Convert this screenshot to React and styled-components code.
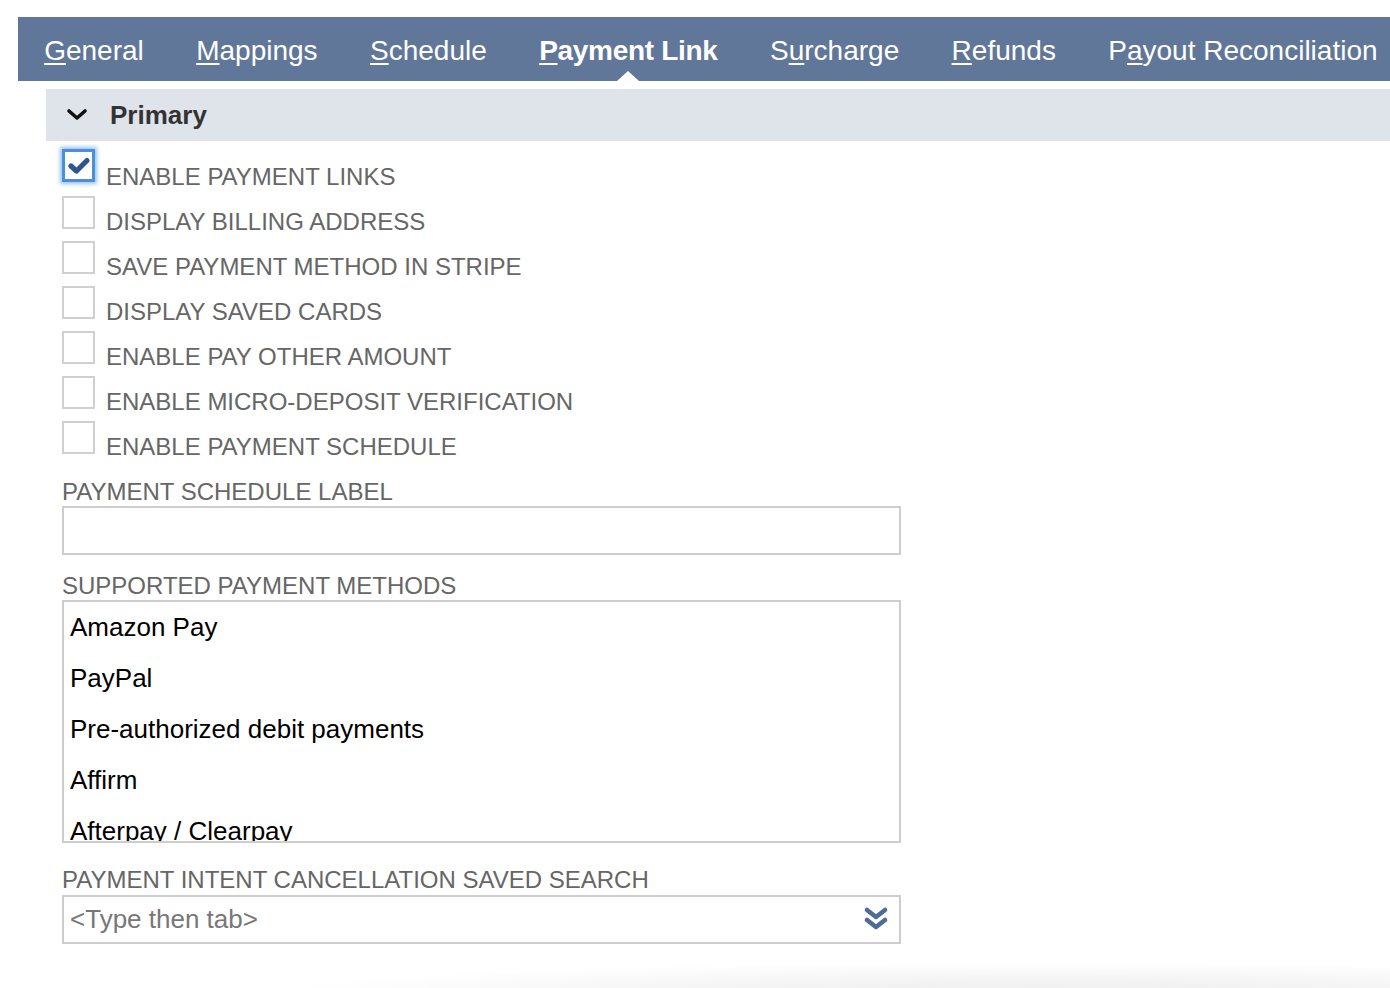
import React from "react";
import styled, { createGlobalStyle } from "styled-components";

const tabs = [
  { pre: "", key: "G", post: "eneral" },
  { pre: "", key: "M", post: "appings" },
  { pre: "", key: "S", post: "chedule" },
  { pre: "", key: "P", post: "ayment Link", active: true },
  { pre: "S", key: "u", post: "rcharge" },
  { pre: "", key: "R", post: "efunds" },
  { pre: "P", key: "a", post: "yout Reconciliation" },
];

const options = [
  { label: "ENABLE PAYMENT LINKS", checked: true },
  { label: "DISPLAY BILLING ADDRESS" },
  { label: "SAVE PAYMENT METHOD IN STRIPE" },
  { label: "DISPLAY SAVED CARDS" },
  { label: "ENABLE PAY OTHER AMOUNT" },
  { label: "ENABLE MICRO-DEPOSIT VERIFICATION" },
  { label: "ENABLE PAYMENT SCHEDULE" },
];

const methods = [
  "Amazon Pay",
  "PayPal",
  "Pre-authorized debit payments",
  "Affirm",
  "Afterpay / Clearpay",
];

export default function App() {
  return (
    <>
      <GlobalStyle />
      <Page>
        <TabBar>
          {tabs.map((t) => (
            <Tab key={t.key + t.post} $active={t.active}>
              {t.pre}
              <u>{t.key}</u>
              {t.post}
            </Tab>
          ))}
        </TabBar>

        <Content>
          <SectionHeader>
            <svg width="22" height="14" viewBox="0 0 22 14">
              <path
                d="M3 3 L11 10 L19 3"
                fill="none"
                stroke="#111"
                strokeWidth="3.6"
                strokeLinecap="round"
                strokeLinejoin="round"
              />
            </svg>
            <SectionTitle>Primary</SectionTitle>
          </SectionHeader>

          <Fields>
            {options.map((o) => (
              <CheckRow key={o.label}>
                <Box $checked={o.checked}>
                  {o.checked && (
                    <svg width="24" height="20" viewBox="0 0 24 20">
                      <path
                        d="M4 10 L9.5 15 L20 4.5"
                        fill="none"
                        stroke="#2d5592"
                        strokeWidth="5.2"
                        strokeLinecap="round"
                        strokeLinejoin="round"
                      />
                    </svg>
                  )}
                </Box>
                <CheckLabel>{o.label}</CheckLabel>
              </CheckRow>
            ))}

            <FieldLabel $top={14}>PAYMENT SCHEDULE LABEL</FieldLabel>
            <TextInput />

            <FieldLabel $top={19}>SUPPORTED PAYMENT METHODS</FieldLabel>
            <ListBox>
              {methods.map((m) => (
                <ListItem key={m}>{m}</ListItem>
              ))}
            </ListBox>

            <FieldLabel $top={25} $bottom={3}>
              PAYMENT INTENT CANCELLATION SAVED SEARCH
            </FieldLabel>
            <SelectInput>
              <Placeholder>&lt;Type then tab&gt;</Placeholder>
              <svg width="26" height="28" viewBox="0 0 26 28">
                <path
                  d="M4 4 L13 11 L22 4 M4 14 L13 21 L22 14"
                  fill="none"
                  stroke="#4f6c96"
                  strokeWidth="4.6"
                  strokeLinecap="round"
                  strokeLinejoin="round"
                />
              </svg>
            </SelectInput>
          </Fields>
        </Content>
        <Fade />
      </Page>
    </>
  );
}

const GlobalStyle = createGlobalStyle`
  html, body {
    margin: 0;
    background: #fff;
    font-family: "Liberation Sans", Arial, sans-serif;
  }
`;

const Page = styled.div`
  padding: 17px 0 0 18px;
  min-height: 988px;
  box-sizing: border-box;
  overflow: hidden;
  display: flex;
  flex-direction: column;
`;

const TabBar = styled.div`
  display: flex;
  height: 64px;
  background: #607799;
  white-space: nowrap;
`;

const Tab = styled.div`
  position: relative;
  height: 64px;
  padding: 0 26.2px;
  line-height: 68px;
  font-size: 28px;
  color: #fff;
  font-weight: ${(p) => (p.$active ? 700 : 400)};
  letter-spacing: ${(p) => (p.$active ? "-0.3px" : "0")};

  u {
    text-decoration-thickness: 2px;
    text-underline-offset: 3px;
  }

  &::after {
    content: "";
    display: ${(p) => (p.$active ? "block" : "none")};
    position: absolute;
    left: 50%;
    bottom: 0;
    margin-left: -11px;
    border-left: 11px solid transparent;
    border-right: 11px solid transparent;
    border-bottom: 10px solid #fff;
  }
`;

const Content = styled.div`
  margin: 8px 0 0 28px;
`;

const SectionHeader = styled.div`
  display: flex;
  align-items: center;
  gap: 22px;
  height: 52px;
  padding-left: 20px;
  background: #dfe3ea;
`;

const SectionTitle = styled.div`
  font-size: 26px;
  font-weight: 700;
  color: #333;
`;

const Fields = styled.div`
  display: flex;
  flex-direction: column;
  align-items: flex-start;
  padding: 10px 0 0 16px;
`;

const CheckRow = styled.div`
  display: flex;
  align-items: flex-start;
  gap: 11px;
  height: 45px;
`;

const Box = styled.div`
  width: 33px;
  height: 33px;
  box-sizing: border-box;
  border: ${(p) => (p.$checked ? "3px solid #4a8fdc" : "2px solid #d0d0d0")};
  box-shadow: ${(p) => (p.$checked ? "0 0 4px 2px rgba(74,143,220,0.55)" : "none")};
  margin-top: ${(p) => (p.$checked ? "-2px" : "0")};
  background: #fff;
  display: flex;
  align-items: center;
  justify-content: center;
`;

const CheckLabel = styled.div`
  padding-top: 14px;
  font-size: 24px;
  line-height: 24px;
  color: #666;
`;

const FieldLabel = styled.div`
  margin-top: ${(p) => p.$top}px;
  margin-bottom: ${(p) => p.$bottom ?? 2}px;
  font-size: 24px;
  line-height: 24px;
  color: #666;
`;

const TextInput = styled.div`
  width: 839px;
  height: 49px;
  box-sizing: border-box;
  border: 2px solid #cdcdcd;
`;

const ListBox = styled.div`
  width: 839px;
  height: 243px;
  box-sizing: border-box;
  border: 2px solid #cdcdcd;
  overflow: hidden;
`;

const ListItem = styled.div`
  padding-left: 6px;
  height: 51px;
  line-height: 51px;
  font-size: 26px;
  color: #000;
`;

const SelectInput = styled.div`
  width: 839px;
  height: 49px;
  box-sizing: border-box;
  border: 2px solid #cdcdcd;
  display: flex;
  align-items: center;
  justify-content: space-between;
  padding: 0 10px 0 6px;
`;

const Placeholder = styled.div`
  font-size: 26px;
  color: #777;
`;

const Fade = styled.div`
  flex: 1;
  margin-top: 6px;
  min-height: 40px;
  background: radial-gradient(ellipse 70% 100% at 75% 110%, #ececec 0%, #f6f6f6 45%, #fff 80%);
`;
